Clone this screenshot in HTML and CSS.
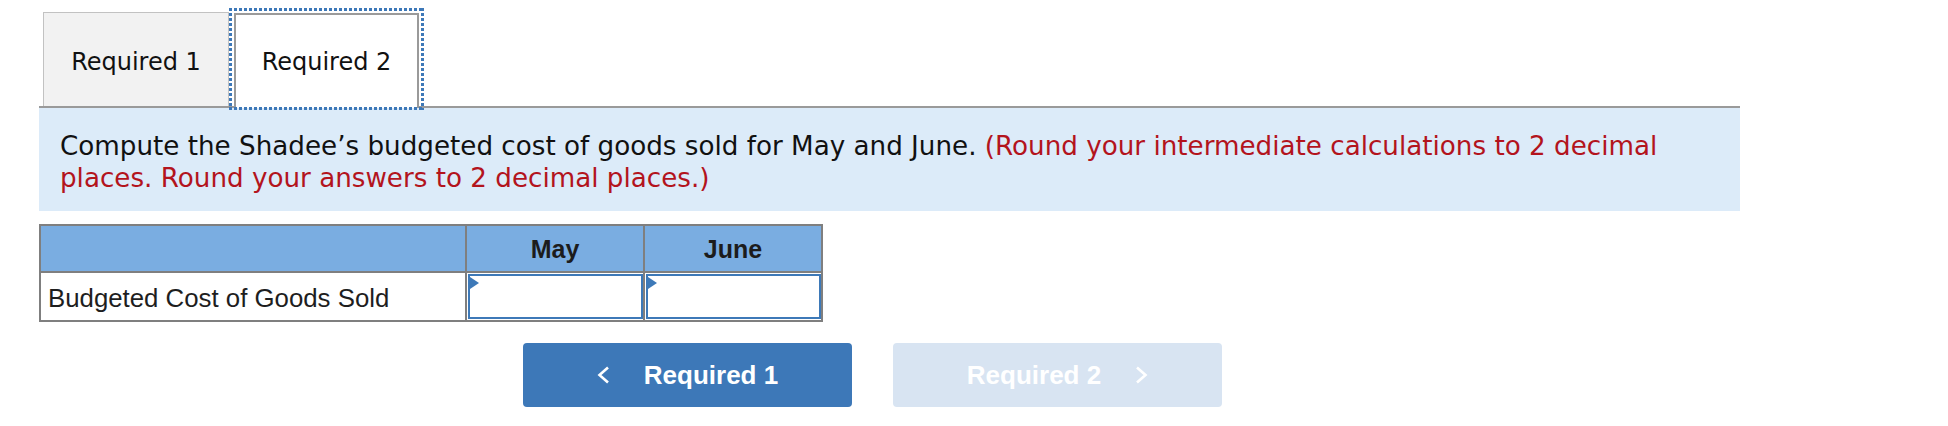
FILE: index.html
```html
<!DOCTYPE html>
<html>
<head>
<meta charset="utf-8">
<link rel="stylesheet" href="styles.css">
</head>
<body>
<div class="page">
  <div class="tabs">
    <div class="tab tab-inactive">Required 1</div>
    <div class="tab tab-active">Required 2</div>
  </div>
  <div class="question">
    Compute the Shadee’s budgeted cost of goods sold for May and June. <span class="note">(Round your intermediate calculations to 2 decimal places. Round your answers to 2 decimal places.)</span>
  </div>
  <table class="grid">
    <thead>
      <tr class="head-row">
        <th class="label-col"></th>
        <th class="val-col">May</th>
        <th class="val-col">June</th>
      </tr>
    </thead>
    <tbody>
      <tr class="body-row">
        <td class="label">Budgeted Cost of Goods Sold</td>
        <td class="input-cell"><div class="input"><span class="flag"></span></div></td>
        <td class="input-cell"><div class="input"><span class="flag"></span></div></td>
      </tr>
    </tbody>
  </table>
  <div class="nav">
    <button class="btn btn-prev">
      <svg class="chev" width="13" height="18" viewBox="0 0 13 18"><polyline points="11,1.5 2.5,9 11,16.5" fill="none" stroke="#ffffff" stroke-width="2.6" stroke-linejoin="miter"/></svg>
      <span>Required 1</span>
    </button>
    <button class="btn btn-next">
      <span>Required 2</span>
      <svg class="chev" width="13" height="18" viewBox="0 0 13 18"><polyline points="2,1.5 10.5,9 2,16.5" fill="none" stroke="#ffffff" stroke-width="2.6" stroke-linejoin="miter"/></svg>
    </button>
  </div>
</div>
</body>
</html>
```
FILE: styles.css
```css
html, body {
  margin: 0;
  padding: 0;
  background: #ffffff;
}

.page {
  padding-left: 39px;
  width: 1701px;
}

.tabs {
  display: flex;
  align-items: flex-end;
  gap: 5px;
  padding-left: 4px;
  padding-top: 11px;
  height: 95px;
  border-bottom: 2px solid #9a9a9a;
  box-sizing: content-box;
}

.tab {
  font-family: "DejaVu Sans", Verdana, sans-serif;
  font-size: 24px;
  color: #111111;
  display: flex;
  align-items: center;
  justify-content: center;
  box-sizing: border-box;
}

.tab-inactive {
  width: 186px;
  height: 94px;
  padding-top: 4px;
  background: #f2f2f2;
  border: 1px solid #c2c2c2;
  border-bottom: none;
}

.tab-active {
  width: 185px;
  height: 95px;
  margin-bottom: -2px;
  padding-top: 0;
  background: #ffffff;
  border: 2px solid #9a9a9a;
  border-bottom: none;
  position: relative;
}

.tab-active::after {
  content: "";
  position: absolute;
  left: -7px;
  right: -7px;
  top: -7px;
  bottom: -2px;
  background:
    repeating-linear-gradient(90deg, #3d78b8 0 3px, transparent 3px 5px) left top / 100% 3px no-repeat,
    repeating-linear-gradient(90deg, #3d78b8 0 3px, transparent 3px 5px) left bottom / 100% 3px no-repeat,
    repeating-linear-gradient(180deg, #3d78b8 0 3px, transparent 3px 5px) left top / 3px 100% no-repeat,
    repeating-linear-gradient(180deg, #3d78b8 0 3px, transparent 3px 5px) right top / 3px 100% no-repeat;
  pointer-events: none;
}

.question {
  background: #dcebf9;
  font-family: "DejaVu Sans", Verdana, sans-serif;
  font-size: 26.2px;
  line-height: 32px;
  color: #111111;
  padding: 22px 21px 17px 21px;
}

.note {
  color: #b3141d;
}

.grid {
  margin-top: 13px;
  border-collapse: collapse;
  border: 2px solid #7f7f7f;
  font-family: "Liberation Sans", Arial, sans-serif;
  font-size: 25.8px;
}

.grid th,
.grid td {
  border: 2px solid #7f7f7f;
  padding: 0;
}

.head-row {
  height: 47px;
}

.body-row {
  height: 48px;
}

.grid thead th {
  background: #7aade1;
  color: #1c1c1c;
  font-weight: bold;
  font-size: 25px;
  text-align: center;
  vertical-align: middle;
  line-height: 28px;
  padding-top: 0;
}

.label-col {
  width: 424px;
}

.val-col {
  width: 176px;
}

.grid td.label {
  color: #1e1e1e;
  padding: 2px 0 0 7px;
  vertical-align: middle;
  line-height: 28px;
}

.grid td.input-cell {
  padding: 1px 0 1px 1px;
  vertical-align: top;
}

.input {
  position: relative;
  height: 45px;
  border: 2px solid #3d79b8;
  background: #ffffff;
  box-sizing: border-box;
}

.flag {
  position: absolute;
  left: 0;
  top: 1px;
  width: 0;
  height: 0;
  border-top: 6px solid transparent;
  border-bottom: 6px solid transparent;
  border-left: 9px solid #3d79b8;
}

.nav {
  display: flex;
  gap: 41px;
  margin-top: 21px;
  padding-left: 484px;
}

.btn {
  width: 329px;
  height: 64px;
  border: none;
  border-radius: 4px;
  display: flex;
  align-items: center;
  justify-content: center;
  gap: 34px;
  font-family: "Liberation Sans", Arial, sans-serif;
  font-weight: bold;
  font-size: 26px;
  color: #ffffff;
  padding: 0;
  margin: 0;
}

.btn-prev {
  background: #3d78b8;
}

.btn-next {
  background: #d8e4f2;
}

.chev {
  display: block;
}
```
